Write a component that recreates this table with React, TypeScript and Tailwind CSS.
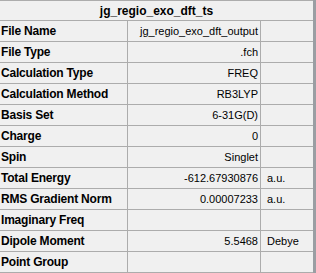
const rows: [string, string, string][] = [
  ['File Name', 'jg_regio_exo_dft_output', ''],
  ['File Type', '.fch', ''],
  ['Calculation Type', 'FREQ', ''],
  ['Calculation Method', 'RB3LYP', ''],
  ['Basis Set', '6-31G(D)', ''],
  ['Charge', '0', ''],
  ['Spin', 'Singlet', ''],
  ['Total Energy', '-612.67930876', 'a.u.'],
  ['RMS Gradient Norm', '0.00007233', 'a.u.'],
  ['Imaginary Freq', '', ''],
  ['Dipole Moment', '5.5468', 'Debye'],
  ['Point Group', '', ''],
];

export default function App() {
  return (
    <div className="flex w-[316px] h-[273px] bg-[#f0f0f0] text-black font-['Liberation_Sans',Arial,sans-serif] text-[12px] leading-none overflow-hidden">
      <div className="w-[313px] flex flex-col">
        {/* title row */}
        <div className="h-[21px] border-t border-b border-[#acacac] flex items-center justify-center font-bold">
          jg_regio_exo_dft_ts
        </div>
        {rows.map(([label, value, unit]) => (
          <div key={label} className="h-[21px] flex border-b border-[#acacac]">
            <div className="w-[128px] border-r border-[#acacac] flex items-center pl-[1px] font-bold tracking-[-0.2px]">
              {label}
            </div>
            <div className="w-[133px] border-r border-[#acacac] flex items-center justify-end pr-[2px] text-[11px]">
              {value}
            </div>
            <div className="w-[52px] flex items-center pl-[6px] text-[11px]">{unit}</div>
          </div>
        ))}
      </div>
      <div className="w-[3px] h-full bg-[#9a9ea3]" />
    </div>
  );
}
